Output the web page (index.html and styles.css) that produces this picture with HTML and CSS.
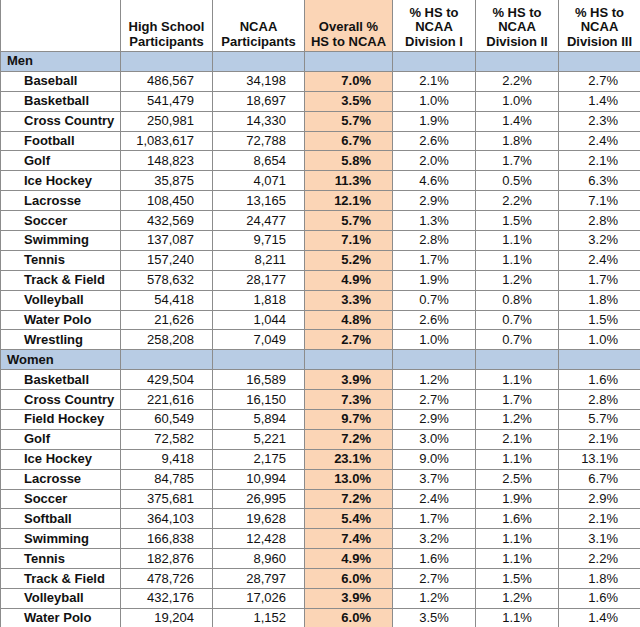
FILE: index.html
```html
<!DOCTYPE html>
<html>
<head>
<meta charset="utf-8">
<link rel="stylesheet" href="styles.css">
</head>
<body>
<table class="grid">
<colgroup>
<col class="c-name"><col class="c-num"><col class="c-num"><col class="c-ov"><col class="c-pct"><col class="c-pct"><col class="c-pct3">
</colgroup>
<thead>
<tr class="head">
<th></th>
<th>High School<br>Participants</th>
<th>NCAA<br>Participants</th>
<th class="ov">Overall %<br>HS to NCAA</th>
<th>% HS to<br>NCAA<br>Division I</th>
<th>% HS to<br>NCAA<br>Division II</th>
<th>% HS to<br>NCAA<br>Division III</th>
</tr>
</thead>
<tbody>
<tr class="group"><td class="gname">Men</td><td></td><td></td><td></td><td></td><td></td><td></td></tr>
<tr><td class="name">Baseball</td><td class="n">486,567</td><td class="n">34,198</td><td class="ov">7.0%</td><td class="p">2.1%</td><td class="p">2.2%</td><td class="p3">2.7%</td></tr>
<tr><td class="name">Basketball</td><td class="n">541,479</td><td class="n">18,697</td><td class="ov">3.5%</td><td class="p">1.0%</td><td class="p">1.0%</td><td class="p3">1.4%</td></tr>
<tr><td class="name">Cross Country</td><td class="n">250,981</td><td class="n">14,330</td><td class="ov">5.7%</td><td class="p">1.9%</td><td class="p">1.4%</td><td class="p3">2.3%</td></tr>
<tr><td class="name">Football</td><td class="n">1,083,617</td><td class="n">72,788</td><td class="ov">6.7%</td><td class="p">2.6%</td><td class="p">1.8%</td><td class="p3">2.4%</td></tr>
<tr><td class="name">Golf</td><td class="n">148,823</td><td class="n">8,654</td><td class="ov">5.8%</td><td class="p">2.0%</td><td class="p">1.7%</td><td class="p3">2.1%</td></tr>
<tr><td class="name">Ice Hockey</td><td class="n">35,875</td><td class="n">4,071</td><td class="ov">11.3%</td><td class="p">4.6%</td><td class="p">0.5%</td><td class="p3">6.3%</td></tr>
<tr><td class="name">Lacrosse</td><td class="n">108,450</td><td class="n">13,165</td><td class="ov">12.1%</td><td class="p">2.9%</td><td class="p">2.2%</td><td class="p3">7.1%</td></tr>
<tr><td class="name">Soccer</td><td class="n">432,569</td><td class="n">24,477</td><td class="ov">5.7%</td><td class="p">1.3%</td><td class="p">1.5%</td><td class="p3">2.8%</td></tr>
<tr><td class="name">Swimming</td><td class="n">137,087</td><td class="n">9,715</td><td class="ov">7.1%</td><td class="p">2.8%</td><td class="p">1.1%</td><td class="p3">3.2%</td></tr>
<tr><td class="name">Tennis</td><td class="n">157,240</td><td class="n">8,211</td><td class="ov">5.2%</td><td class="p">1.7%</td><td class="p">1.1%</td><td class="p3">2.4%</td></tr>
<tr><td class="name">Track &amp; Field</td><td class="n">578,632</td><td class="n">28,177</td><td class="ov">4.9%</td><td class="p">1.9%</td><td class="p">1.2%</td><td class="p3">1.7%</td></tr>
<tr><td class="name">Volleyball</td><td class="n">54,418</td><td class="n">1,818</td><td class="ov">3.3%</td><td class="p">0.7%</td><td class="p">0.8%</td><td class="p3">1.8%</td></tr>
<tr><td class="name">Water Polo</td><td class="n">21,626</td><td class="n">1,044</td><td class="ov">4.8%</td><td class="p">2.6%</td><td class="p">0.7%</td><td class="p3">1.5%</td></tr>
<tr><td class="name">Wrestling</td><td class="n">258,208</td><td class="n">7,049</td><td class="ov">2.7%</td><td class="p">1.0%</td><td class="p">0.7%</td><td class="p3">1.0%</td></tr>
<tr class="group"><td class="gname">Women</td><td></td><td></td><td></td><td></td><td></td><td></td></tr>
<tr><td class="name">Basketball</td><td class="n">429,504</td><td class="n">16,589</td><td class="ov">3.9%</td><td class="p">1.2%</td><td class="p">1.1%</td><td class="p3">1.6%</td></tr>
<tr><td class="name">Cross Country</td><td class="n">221,616</td><td class="n">16,150</td><td class="ov">7.3%</td><td class="p">2.7%</td><td class="p">1.7%</td><td class="p3">2.8%</td></tr>
<tr><td class="name">Field Hockey</td><td class="n">60,549</td><td class="n">5,894</td><td class="ov">9.7%</td><td class="p">2.9%</td><td class="p">1.2%</td><td class="p3">5.7%</td></tr>
<tr><td class="name">Golf</td><td class="n">72,582</td><td class="n">5,221</td><td class="ov">7.2%</td><td class="p">3.0%</td><td class="p">2.1%</td><td class="p3">2.1%</td></tr>
<tr><td class="name">Ice Hockey</td><td class="n">9,418</td><td class="n">2,175</td><td class="ov">23.1%</td><td class="p">9.0%</td><td class="p">1.1%</td><td class="p3">13.1%</td></tr>
<tr><td class="name">Lacrosse</td><td class="n">84,785</td><td class="n">10,994</td><td class="ov">13.0%</td><td class="p">3.7%</td><td class="p">2.5%</td><td class="p3">6.7%</td></tr>
<tr><td class="name">Soccer</td><td class="n">375,681</td><td class="n">26,995</td><td class="ov">7.2%</td><td class="p">2.4%</td><td class="p">1.9%</td><td class="p3">2.9%</td></tr>
<tr><td class="name">Softball</td><td class="n">364,103</td><td class="n">19,628</td><td class="ov">5.4%</td><td class="p">1.7%</td><td class="p">1.6%</td><td class="p3">2.1%</td></tr>
<tr><td class="name">Swimming</td><td class="n">166,838</td><td class="n">12,428</td><td class="ov">7.4%</td><td class="p">3.2%</td><td class="p">1.1%</td><td class="p3">3.1%</td></tr>
<tr><td class="name">Tennis</td><td class="n">182,876</td><td class="n">8,960</td><td class="ov">4.9%</td><td class="p">1.6%</td><td class="p">1.1%</td><td class="p3">2.2%</td></tr>
<tr><td class="name">Track &amp; Field</td><td class="n">478,726</td><td class="n">28,797</td><td class="ov">6.0%</td><td class="p">2.7%</td><td class="p">1.5%</td><td class="p3">1.8%</td></tr>
<tr><td class="name">Volleyball</td><td class="n">432,176</td><td class="n">17,026</td><td class="ov">3.9%</td><td class="p">1.2%</td><td class="p">1.2%</td><td class="p3">1.6%</td></tr>
<tr><td class="name">Water Polo</td><td class="n">19,204</td><td class="n">1,152</td><td class="ov">6.0%</td><td class="p">3.5%</td><td class="p">1.1%</td><td class="p3">1.4%</td></tr>
</tbody>
</table>
</body>
</html>
```

FILE: styles.css
```css
html, body {
  margin: 0;
  padding: 0;
  background: #ffffff;
}

body {
  font-family: "Liberation Sans", Arial, sans-serif;
  font-size: 13px;
  color: #111111;
  overflow: hidden;
}

.grid {
  border-collapse: collapse;
  table-layout: fixed;
  width: 640px;
}

.c-name { width: 120px; }
.c-num { width: 92px; }
.c-ov { width: 88px; }
.c-pct { width: 83px; }
.c-pct3 { width: 82px; }

.grid th,
.grid td {
  border: 1px solid #8c8c8c;
  padding: 0;
  white-space: nowrap;
  overflow: hidden;
}

.head th {
  height: 49px;
  border-top: none;
  font-weight: bold;
  line-height: 14.5px;
  text-align: center;
  vertical-align: bottom;
  padding-bottom: 2px;
}

.grid td {
  height: 18.9px;
  line-height: 16px;
}

.group td {
  background: #b8cce4;
}

.gname {
  font-weight: bold;
  padding-left: 6px !important;
}

.name {
  font-weight: bold;
  padding-left: 23px !important;
}

.n {
  text-align: right;
  padding-right: 18px !important;
}

.ov {
  background: #fbd5b6;
  font-weight: bold;
  text-align: right;
  padding-right: 21px !important;
}

.group td.ov,
.group td:nth-child(4) {
  background: #b8cce4;
}

th.ov {
  text-align: center;
  padding-right: 0 !important;
}

.p {
  text-align: center;
}

.p3 {
  text-align: right;
  padding-right: 22px !important;
}
```
